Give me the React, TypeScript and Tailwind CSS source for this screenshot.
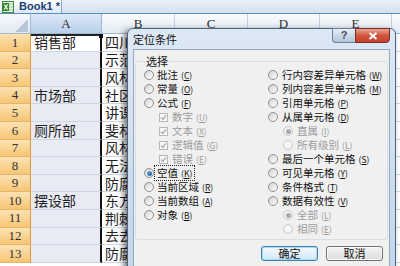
import type { ReactNode } from 'react';

const rows = [
  { a: '销售部', b: '四川' },
  { a: '', b: '示范' },
  { a: '', b: '风林' },
  { a: '市场部', b: '社区' },
  { a: '', b: '讲课' },
  { a: '厕所部', b: '斐林' },
  { a: '', b: '风林' },
  { a: '', b: '无法' },
  { a: '', b: '防腐' },
  { a: '摆设部', b: '东方' },
  { a: '', b: '荆棘' },
  { a: '', b: '去去' },
  { a: '', b: '防腐' },
];

type Opt = {
  label: string;
  key: string;
  kind: 'radio' | 'check' | 'sub';
  checked?: boolean;
  disabled?: boolean;
  focus?: boolean;
};

const leftOpts: Opt[] = [
  { label: '批注', key: 'C', kind: 'radio' },
  { label: '常量', key: 'O', kind: 'radio' },
  { label: '公式', key: 'F', kind: 'radio' },
  { label: '数字', key: 'U', kind: 'check', checked: true, disabled: true },
  { label: '文本', key: 'X', kind: 'check', checked: true, disabled: true },
  { label: '逻辑值', key: 'G', kind: 'check', checked: true, disabled: true },
  { label: '错误', key: 'E', kind: 'check', checked: true, disabled: true },
  { label: '空值', key: 'K', kind: 'radio', checked: true, focus: true },
  { label: '当前区域', key: 'R', kind: 'radio' },
  { label: '当前数组', key: 'A', kind: 'radio' },
  { label: '对象', key: 'B', kind: 'radio' },
];

const rightOpts: Opt[] = [
  { label: '行内容差异单元格', key: 'W', kind: 'radio' },
  { label: '列内容差异单元格', key: 'M', kind: 'radio' },
  { label: '引用单元格', key: 'P', kind: 'radio' },
  { label: '从属单元格', key: 'D', kind: 'radio' },
  { label: '直属', key: 'I', kind: 'sub', checked: true, disabled: true },
  { label: '所有级别', key: 'L', kind: 'sub', disabled: true },
  { label: '最后一个单元格', key: 'S', kind: 'radio' },
  { label: '可见单元格', key: 'Y', kind: 'radio' },
  { label: '条件格式', key: 'T', kind: 'radio' },
  { label: '数据有效性', key: 'V', kind: 'radio' },
  { label: '全部', key: 'L', kind: 'sub', checked: true, disabled: true },
  { label: '相同', key: 'E', kind: 'sub', disabled: true },
];

function Radio({ checked, disabled }: { checked?: boolean; disabled?: boolean }) {
  return (
    <span
      className={`w-[10px] h-[10px] shrink-0 rounded-full border flex items-center justify-center ${
        disabled
          ? 'border-[#c8c8c8] bg-[#f4f4f4]'
          : 'border-[#8e8f8f] bg-gradient-to-br from-[#d3d3d3] to-[#ffffff]'
      }`}
    >
      {checked && (
        <span
          className={`w-[5px] h-[5px] rounded-full ${
            disabled ? 'bg-[#a8a8a8]' : 'bg-gradient-to-br from-[#78b8ea] to-[#0d4f95]'
          }`}
        />
      )}
    </span>
  );
}

function Check() {
  return (
    <span className="w-[9px] h-[9px] shrink-0 border border-[#b8b8b8] bg-[#f6f6f6] flex items-center justify-center">
      <svg width="7" height="7" viewBox="0 0 7 7">
        <path d="M1 3.6 L2.8 5.4 L6 1.3" fill="none" stroke="#a3a3a3" strokeWidth="1.2" />
      </svg>
    </span>
  );
}

function Label({ opt }: { opt: Opt }) {
  const body: ReactNode = (
    <>
      {opt.label}
      <span className="text-[8.5px] ml-[3px]">
        (<u>{opt.key}</u>)
      </span>
    </>
  );
  return (
    <span
      className={`leading-none whitespace-nowrap ${opt.disabled ? 'text-[#9c9c9c]' : 'text-[#111]'} ${
        opt.focus ? 'outline outline-1 outline-dotted outline-[#222] outline-offset-[2px]' : ''
      }`}
    >
      {body}
    </span>
  );
}

function OptRow({ opt, right }: { opt: Opt; right?: boolean }) {
  if (opt.kind === 'check') {
    return (
      <div className="h-[14px] flex items-center gap-[4px] pl-[15px]">
        <Check />
        <Label opt={opt} />
      </div>
    );
  }
  if (opt.kind === 'sub') {
    return (
      <div className="h-[14px] flex items-center gap-[4px] pl-[15px]">
        <Radio checked={opt.checked} disabled />
        <Label opt={opt} />
      </div>
    );
  }
  return (
    <div className={`h-[14px] flex items-center ${right ? 'gap-[4px]' : 'gap-[3px]'}`}>
      <Radio checked={opt.checked} disabled={opt.disabled} />
      <Label opt={opt} />
    </div>
  );
}

function ExcelIcon() {
  return (
    <svg width="12" height="12" viewBox="0 0 12 12">
      <rect x="0.5" y="0.5" width="11" height="11" fill="#eaf3e4" stroke="#3f8a3a" />
      <path d="M6 3 H11 M6 6 H11 M6 9 H11" stroke="#86b97f" strokeWidth="0.8" />
      <rect x="1" y="2" width="6" height="8" fill="#2f8a2d" />
      <path d="M2.3 3.5 L5.7 8.5 M5.7 3.5 L2.3 8.5" stroke="#fff" strokeWidth="1.2" />
    </svg>
  );
}

const colW = ['w-[73px]', 'w-[73px]', 'w-[72px]', 'w-[72px]', 'w-[72px]'];

export default function App() {
  return (
    <div className="relative w-[400px] h-[266px] overflow-hidden bg-white">
      {/* workbook tab strip */}
      <div className="h-[14px] flex bg-gradient-to-b from-[#e9f0f9] to-[#d4e1f2] border-b border-[#5d8cc9]">
        <div className="w-[62px] flex items-center gap-[5px] pl-[2px] bg-gradient-to-b from-[#ffffff] to-[#dde8f6] border-r border-[#8aa6cb]">
          <ExcelIcon />
          <span className="text-[11px] font-bold text-[#1b3f73] font-['Liberation_Sans',sans-serif] leading-none">
            Book1 *
          </span>
        </div>
      </div>

      {/* column headers */}
      <div className="h-[20px] flex border-b border-[#9eb6ce] font-['Liberation_Serif',serif] text-[13px] text-[#2c2c2c]">
        <div className="w-[31px] shrink-0 relative bg-gradient-to-b from-[#f6f8fc] to-[#e3eaf4] border-r border-[#9eb6ce]">
          <svg className="absolute right-[2px] bottom-[1px]" width="13" height="13" viewBox="0 0 13 13">
            <path d="M13 0 L13 13 L0 13 Z" fill="#b7c6d9" />
          </svg>
        </div>
        <div className="w-[71px] shrink-0 flex items-center justify-center bg-gradient-to-b from-[#dce8f7] to-[#b9cfea] border-r border-[#9eb6ce]">
          A
        </div>
        {['B', 'C', 'D', 'E', ''].map((c, i) => (
          <div
            key={i}
            className={`${colW[i]} shrink-0 flex items-center justify-center bg-gradient-to-b from-[#f9fbfd] to-[#e4ebf5] border-r border-[#c5d2e3]`}
          >
            {c}
          </div>
        ))}
      </div>

      {/* rows */}
      <div className="flex flex-col">
        {rows.map((r, i) => (
          <div key={i} className="h-[17.6px] flex">
            <div className="w-[31px] shrink-0 flex items-center justify-center bg-gradient-to-b from-[#fde2b3] to-[#f6c673] border-r border-[#e9973a] border-b border-b-[#e8b36a] font-['Liberation_Serif',serif] text-[13px] text-[#333]">
              {i + 1}
            </div>
            <div
              className={`w-[71px] shrink-0 relative flex items-center pl-[3px] border-r-2 border-r-[#111] border-b border-b-[#cfd6e3] text-[14px] text-[#222] font-['Noto_Sans_CJK_SC',sans-serif] ${
                i === 0 ? 'bg-white shadow-[inset_0_2px_0_#222]' : 'bg-[#e8ebf4]'
              }`}
            >
              {r.a}
              {i === 0 && <span className="absolute right-[-3px] top-0 w-[4px] h-[4px] bg-[#111]" />}
            </div>
            <div className="w-[73px] shrink-0 flex items-center pl-[3px] border-r border-[#d0d7e5] border-b border-b-[#d0d7e5] text-[14px] text-[#222] font-['Noto_Sans_CJK_SC',sans-serif]">
              {r.b}
            </div>
            {colW.slice(1).map((w, j) => (
              <div key={j} className={`${w} shrink-0 border-r border-[#d0d7e5] border-b border-b-[#d0d7e5]`} />
            ))}
          </div>
        ))}
      </div>

      {/* Go To Special dialog */}
      <div className="absolute left-[127px] top-[28px] w-[269px] h-[250px] flex flex-col rounded-t-[6px] border border-[#4d6482] bg-gradient-to-b from-[#dde8f5] to-[#c3d6ea] shadow-[-3px_2px_6px_rgba(0,0,0,0.55)] font-['Noto_Sans_CJK_SC',sans-serif] text-[10.5px]">
        <div className="h-[20px] shrink-0 relative flex items-center pl-[5px] text-[11px] text-[#111]">
          定位条件
          <div className="absolute top-[-1px] right-[5px] flex">
            <div className="w-[23px] h-[15px] flex items-center justify-center rounded-bl-[4px] border border-[#6d819d] border-r-0 bg-gradient-to-b from-[#e6edf5] to-[#b5c6da] text-[11px] font-bold text-[#3d4a5c] font-['Liberation_Sans',sans-serif]">
              ?
            </div>
            <div className="w-[35px] h-[15px] flex items-center justify-center rounded-br-[4px] border border-[#7a2a22] bg-gradient-to-b from-[#e8a493] via-[#d0553e] to-[#c4422d]">
              <svg width="10" height="8" viewBox="0 0 10 8">
                <path d="M1.5 1 L8.5 7 M8.5 1 L1.5 7" stroke="#fff" strokeWidth="2" />
              </svg>
            </div>
          </div>
        </div>

        <div className="flex-1 mx-[5px] bg-[#f0f0f0] border border-[#93a8c1] px-[1px]">
          <fieldset className="mt-[4px] border border-[#d5dfe5] rounded-[3px] pl-[8px] pt-[0px] pb-[3px]">
            <legend className="ml-[1px] px-[1px] text-[11px] leading-[14px] text-[#111]">选择</legend>
            <div className="flex">
              <div className="w-[124px] flex flex-col">
                {leftOpts.map((o) => (
                  <OptRow key={o.label} opt={o} />
                ))}
              </div>
              <div className="flex flex-col">
                {rightOpts.map((o) => (
                  <OptRow key={o.label} opt={o} right />
                ))}
              </div>
            </div>
          </fieldset>
          <div className="flex justify-end gap-[8px] pr-[5px] mt-[6px]">
            <button className="w-[57px] h-[15px] flex items-center justify-center rounded-[3px] border border-[#3c7fb1] bg-gradient-to-b from-[#f4f9fd] to-[#d4e7f6] shadow-[inset_0_0_0_1px_#a8dcf5] text-[11px] text-[#111]">
              确定
            </button>
            <button className="w-[57px] h-[15px] flex items-center justify-center rounded-[3px] border border-[#707070] bg-gradient-to-b from-[#f3f3f3] to-[#dcdcdc] shadow-[inset_0_0_0_1px_#fbfbfb] text-[11px] text-[#111]">
              取消
            </button>
          </div>
        </div>
      </div>
    </div>
  );
}
